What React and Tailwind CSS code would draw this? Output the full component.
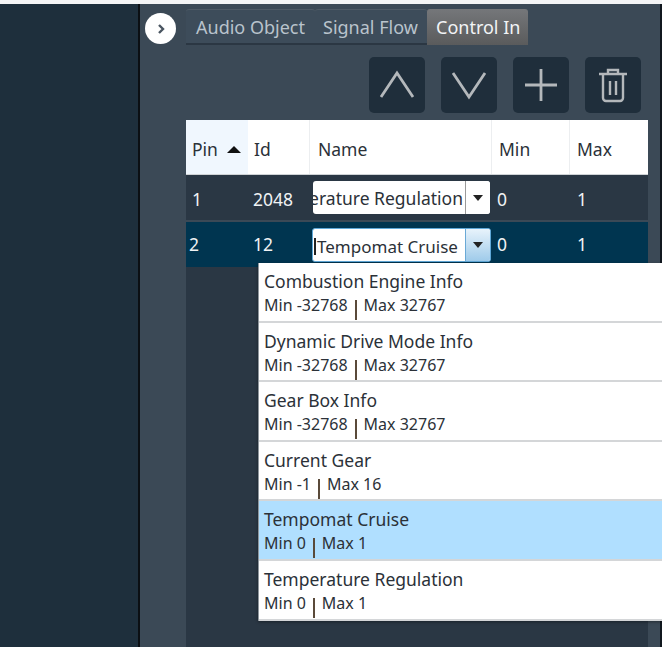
const F = { fontFamily: '"Noto Sans", "Open Sans", sans-serif' };

const items = [
  ["Combustion Engine Info", "Min -32768", "Max 32767"],
  ["Dynamic Drive Mode Info", "Min -32768", "Max 32767"],
  ["Gear Box Info", "Min -32768", "Max 32767"],
  ["Current Gear", "Min -1", "Max 16"],
  ["Tempomat Cruise", "Min 0", "Max 1"],
  ["Temperature Regulation", "Min 0", "Max 1"],
];

function Btn({ children }) {
  return (
    <div className="w-[56px] h-[56px] rounded-[5px] bg-[#1f2e3b] flex items-center justify-center">
      <svg width="40" height="40" viewBox="0 0 40 40" fill="none" stroke="#b4b8bb" strokeWidth="2.8">
        {children}
      </svg>
    </div>
  );
}

function Arrow() {
  return <div className="w-0 h-0 border-x-[5px] border-x-transparent border-t-[6px] border-t-[#222]" />;
}

function Combo({ focused, children }) {
  return (
    <div className={`bg-white rounded-[3px] flex items-stretch overflow-hidden ${focused ? "w-[179px] h-[34px] -ml-[1px] border border-[#5fa8d8]" : "w-[177px] h-[33px]"}`}>
      <div className="flex-1 min-w-0 overflow-hidden flex items-center relative pt-[3px]">{children}</div>
      <div className={`w-[25px] flex items-center justify-center border-l ${focused ? "border-[#6aa9d6] bg-gradient-to-b from-[#e8f3fb] to-[#9fcbea]" : "border-[#9a9a9a] bg-white"}`}>
        <Arrow />
      </div>
    </div>
  );
}

export default function App() {
  return (
    <div className="w-[662px] h-[647px] overflow-hidden bg-white flex flex-col text-[17.5px] leading-none" style={F}>
      <div className="h-[4px] bg-[#f4f5f6] shrink-0" />
      <div className="flex-1 min-h-0 flex">
        <div className="w-[138px] bg-[#1e2f3c] shrink-0" />
        <div className="w-[2px] bg-[#0b0f13] shrink-0" />
        <div className="flex-1 min-w-0 bg-[#3b4956] border-r-2 border-[#11181f] flex">
          <div className="w-[46px] shrink-0 pt-[9px] pl-[5px]">
            <div className="w-[31px] h-[31px] rounded-full bg-white flex items-center justify-center">
              <svg width="12" height="12" viewBox="0 0 12 12" fill="none" stroke="#4a5561" strokeWidth="2.4">
                <path d="M4 2l4 4-4 4" />
              </svg>
            </div>
          </div>
          <div className="flex-1 min-w-0 flex flex-col">
            <div className="flex h-[36px] mt-[5px] shrink-0 text-[18px]">
              <div className="w-[129px] pl-[10px] flex items-center text-[#b9c3cc] bg-[#3d4c5a] border-t border-b-2 border-t-[#4e5a66] border-b-[#2b3743] rounded-t-[3px]">Audio Object</div>
              <div className="w-[112px] pl-[8px] flex items-center text-[#b9c3cc] bg-[#3d4c5a] border-t border-b-2 border-t-[#4e5a66] border-b-[#2b3743] rounded-t-[3px]">Signal Flow</div>
              <div className="w-[101px] pl-[9px] flex items-center text-[#f2f4f6] bg-gradient-to-b from-[#75777a] to-[#5a5b5c] rounded-t-[3px]">Control In</div>
            </div>
            <div className="flex justify-end gap-[16px] pr-[19px] mt-[12px] shrink-0">
              <Btn><path d="M4 32L20 8l16 24" /></Btn>
              <Btn><path d="M4 8l16 24L36 8" /></Btn>
              <Btn><path d="M20 4v32M4 20h32" /></Btn>
              <Btn>
                <path d="M6 9h28M15 8V5h10v3M10 10v23a3 3 0 003 3h14a3 3 0 003-3V10M17 16v14M23 16v14" strokeWidth="2.4" />
              </Btn>
            </div>
            <div className="mt-[7px] w-[462px] flex-1 min-h-0 flex flex-col bg-[#2a3744] relative">
              <div className="h-[55px] shrink-0 bg-white text-[#2b3138] flex items-center border-b border-[#cfd3d6]">
                <div className="w-[62px] h-full bg-[#f0f7fe] flex items-center pl-[6px] pt-[5px] gap-[9px]">
                  Pin
                  <div className="w-0 h-0 border-x-[7px] border-x-transparent border-b-[7px] border-b-[#111]" />
                </div>
                <div className="w-[62px] h-full pl-[6px] pt-[5px] flex items-center border-r border-[#eceef0]">Id</div>
                <div className="w-[182px] h-full pl-[8px] pt-[5px] flex items-center border-r border-[#eceef0]">Name</div>
                <div className="w-[78px] h-full pl-[7px] pt-[5px] flex items-center border-r border-[#eceef0]">Min</div>
                <div className="pl-[7px] pt-[5px]">Max</div>
              </div>
              <div className="h-[47px] shrink-0 flex items-center text-[#f0f2f4] border-b-[2px] border-[#3b4956]">
                <div className="w-[62px] pl-[6px] pt-[4px]">1</div>
                <div className="w-[65px] pl-[5px] pt-[4px]">2048</div>
                <div className="w-[183px]">
                  <Combo>
                    <span className="absolute right-[2px] text-[#2b3138] whitespace-nowrap">Temperature Regulation</span>
                  </Combo>
                </div>
                <div className="w-[80px] pl-[1px] pt-[4px]">0</div>
                <div className="pl-[1px] pt-[4px]">1</div>
              </div>
              <div className="h-[45px] shrink-0 flex items-center text-[#f0f2f4] bg-[#003550]">
                <div className="w-[62px] pl-[3px] pt-[1px]">2</div>
                <div className="w-[65px] pl-[5px] pt-[1px]">12</div>
                <div className="w-[183px]">
                  <Combo focused>
                    <span className="text-[#2b3138] whitespace-nowrap pl-[1px] ml-[1px] border-l-2 border-[#222] text-[17px]">Tempomat Cruise</span>
                  </Combo>
                </div>
                <div className="w-[80px] pl-[1px] pt-[1px]">0</div>
                <div className="pl-[1px] pt-[1px]">1</div>
              </div>
              <div className="absolute left-[72px] top-[143px] w-[404px] h-[358px] bg-white border-l border-b border-[#8f979e] flex flex-col shadow-[0_1px_3px_#0006] text-[#2b3138]">
                {items.map(([t, a, b], i) => (
                  <div key={t} className={`h-[59.6px] shrink-0 pl-[5px] pt-[8px] flex flex-col gap-[6px] border-b-2 border-[#d4d6d8] ${i === 4 ? "bg-[#b0dfff]" : ""}`}>
                    <div className="text-[17.5px] leading-[20px] whitespace-nowrap">{t}</div>
                    <div className="text-[16px] leading-[17px] whitespace-nowrap flex items-start">
                      {a}
                      <span className="w-[2px] h-[20px] bg-[#5a4a3a] mx-[7px] mt-[3px]" />
                      {b}
                    </div>
                  </div>
                ))}
              </div>
            </div>
          </div>
        </div>
      </div>
    </div>
  );
}
